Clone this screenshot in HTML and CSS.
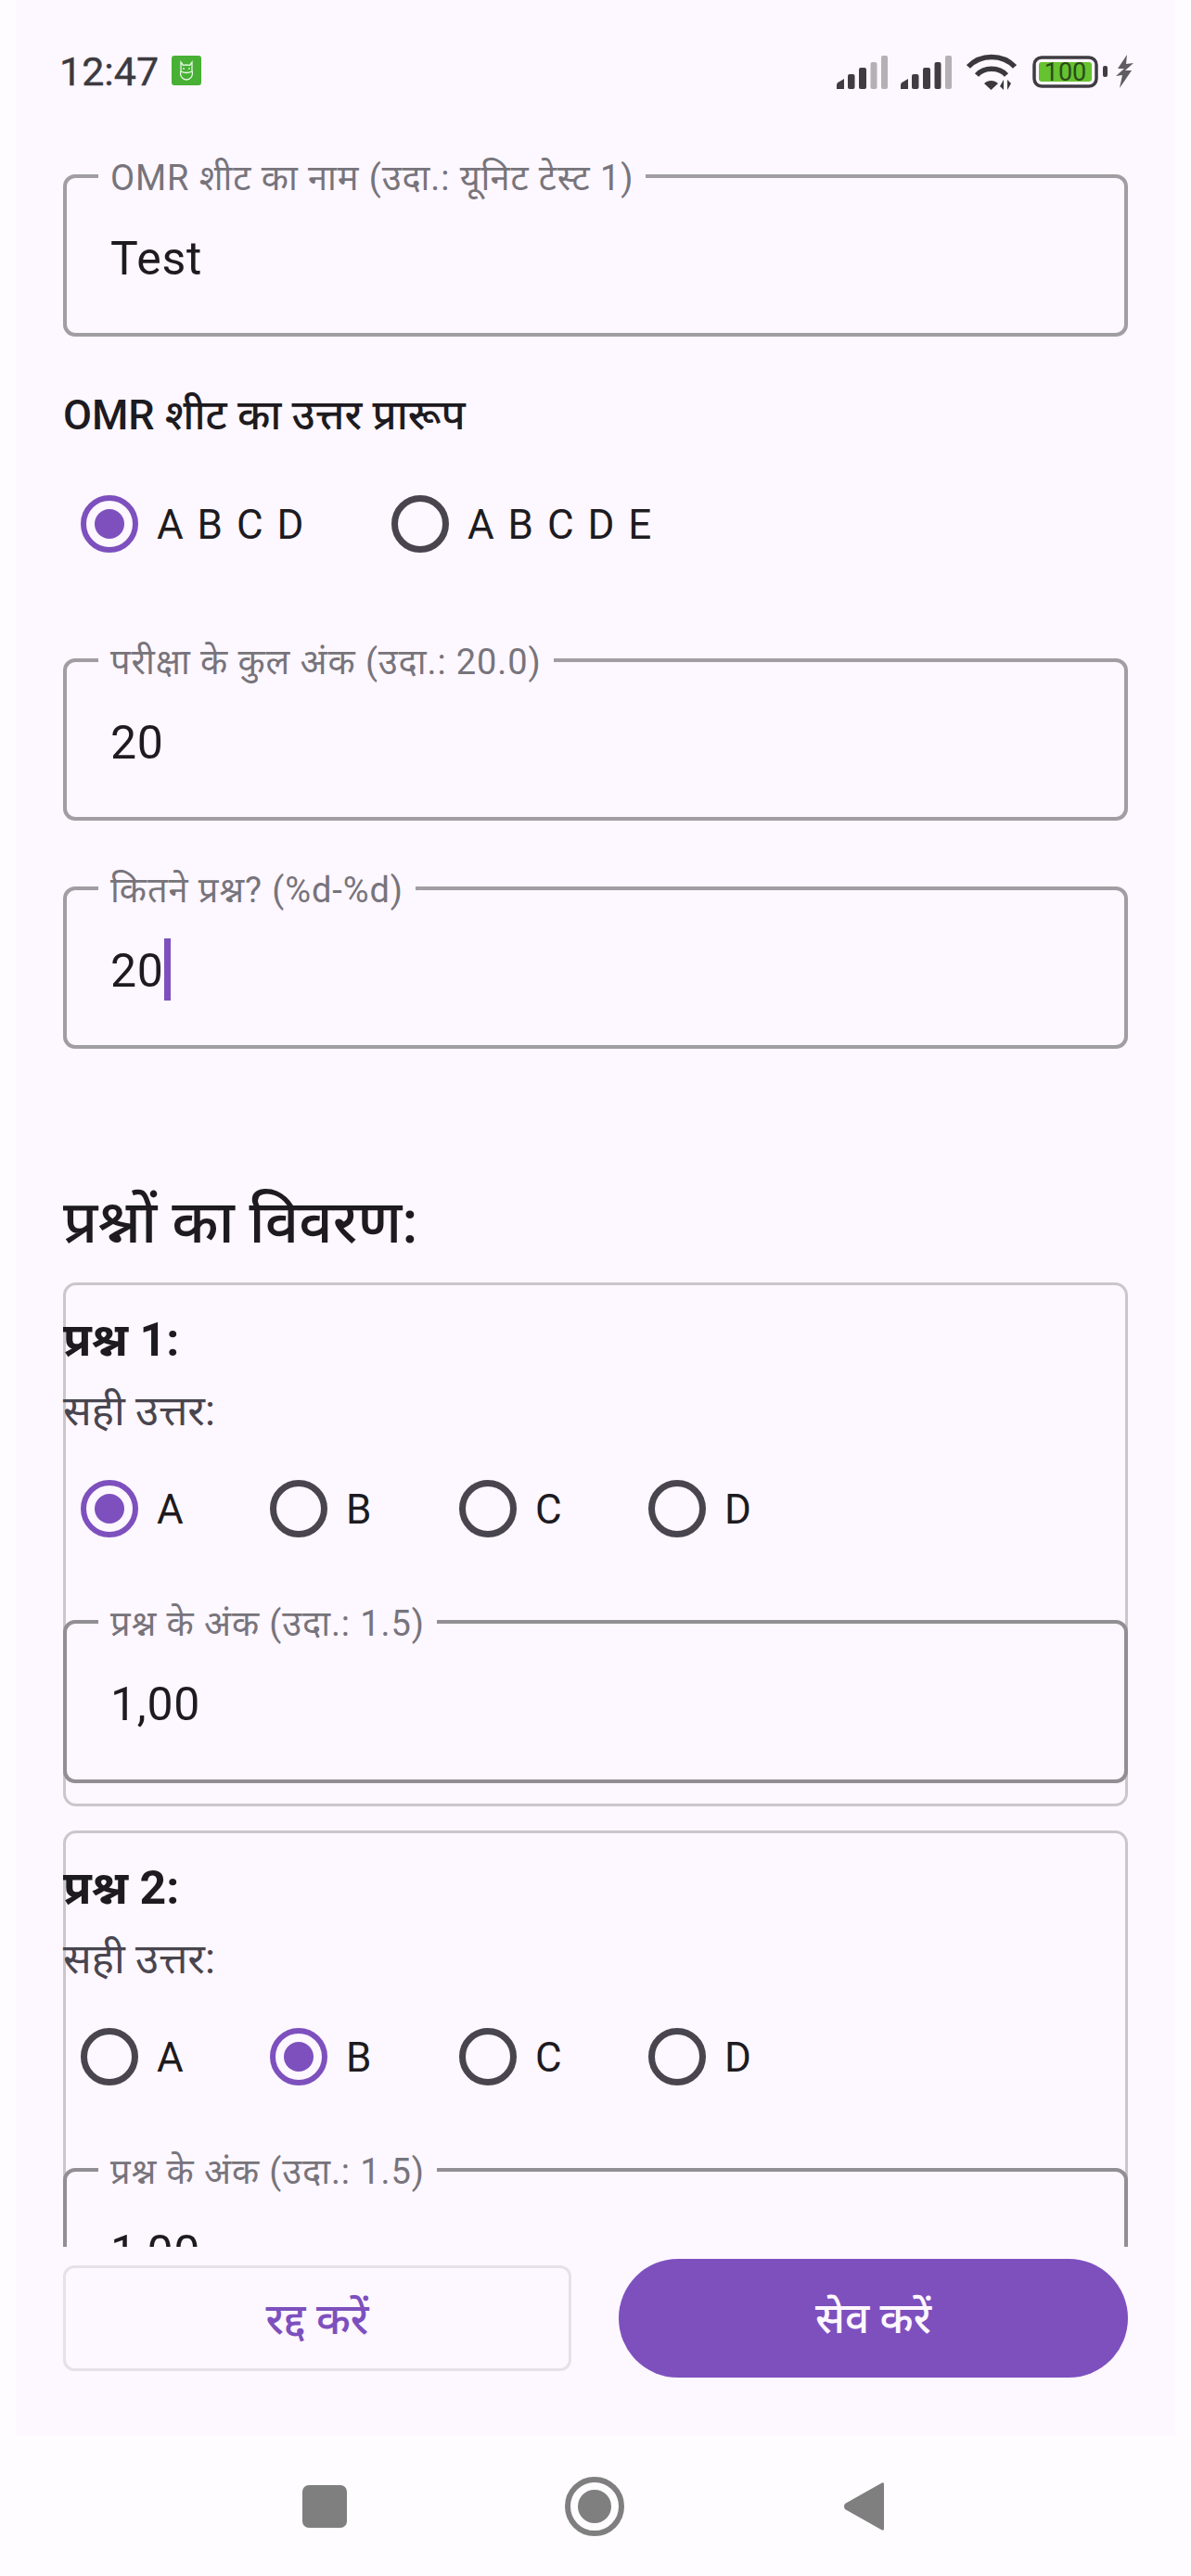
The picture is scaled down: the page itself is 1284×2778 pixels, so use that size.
FILE: index.html
```html
<!DOCTYPE html>
<html lang="hi">
<head>
<meta charset="utf-8">
<title>OMR</title>
<link rel="stylesheet" href="styles.css">
</head>
<body>
<div class="app">
  <header class="status">
    <span class="time">12:47</span>
    <svg class="app-icon" viewBox="0 0 32 32"><rect width="32" height="32" rx="3" fill="#47b035"/><path d="M10 7l2.500 3.500q3.500-1 7 0L22 7v9c2 7-3 10-6 10s-8-3-6-10z" fill="none" stroke="#eaf7e6" stroke-width="1.300"/><path d="M10 17q6 3 12 0" fill="none" stroke="#eaf7e6" stroke-width="1.300"/><circle cx="13" cy="14" r=".9" fill="#eaf7e6"/><circle cx="19" cy="14" r=".9" fill="#eaf7e6"/></svg>
    <div class="status-right">
      <svg class="signal" viewBox="0 0 55 36"><g fill="#3f3d42"><path d="M0 36v-4q0-3 3-4l5-3v11z"/><rect x="12" y="20" width="7.500" height="16" rx="2"/><rect x="24" y="13" width="8" height="23" rx="2"/></g><g fill="#b5b0b5"><rect x="36.500" y="7" width="7" height="29" rx="2"/><rect x="48" y="0" width="7" height="36" rx="2"/></g></svg>
      <svg class="signal" viewBox="0 0 55 36"><g fill="#3f3d42"><path d="M0 36v-4q0-3 3-4l5-3v11z"/><rect x="12" y="20" width="7.500" height="16" rx="2"/><rect x="24" y="13" width="8" height="23" rx="2"/><rect x="36.500" y="7" width="7" height="29" rx="2"/></g><rect x="48" y="0" width="7" height="36" rx="2" fill="#b5b0b5"/></svg>
      <svg class="wifi" viewBox="0 0 54 40"><g fill="none" stroke="#3a383d" stroke-width="5.500"><path d="M2 15C15 1 39 1 52 15"/><path d="M11 24C19 15 35 15 43 24"/></g><path d="M19 33c4-4 11-4 15 0l-7.500 7z" fill="#3a383d"/><path d="M40 29v11l-4-4zM44 40V29l4 4z" fill="#3a383d"/></svg>
      <div class="battery"><svg class="battery-body" viewBox="0 0 71 35"><rect x="2" y="2" width="67" height="31" rx="8" fill="none" stroke="#3f3d42" stroke-width="3.500"/><rect x="7" y="7" width="57" height="21" rx="3" fill="#66c22f"/><text class="battery-text" x="35.500" y="27">100</text></svg><span class="battery-nub"></span></div>
      <svg class="bolt" viewBox="0 0 20 36"><path d="M13 0L3 15l7 0-9 8 7-1L5 36 18 17l-7 0 9-8-8 1z" fill="#5f5d61"/></svg>
    </div>
  </header>

  <main class="scroll">
    <fieldset class="field field-first">
      <legend class="field-label">OMR शीट का नाम (उदा.: यूनिट टेस्ट 1)</legend>
      <div class="field-value">Test</div>
    </fieldset>

    <h2 class="format-title">OMR शीट का उत्तर प्रारूप</h2>
    <div class="format-row">
      <div class="option option-format"><span class="radio checked"><span class="dot"></span></span><span class="option-label spaced">A B C D</span></div>
      <div class="option"><span class="radio"></span><span class="option-label spaced">A B C D E</span></div>
    </div>

    <fieldset class="field field-marks">
      <legend class="field-label">परीक्षा के कुल अंक (उदा.: 20.0)</legend>
      <div class="field-value">20</div>
    </fieldset>
    <fieldset class="field field-count">
      <legend class="field-label">कितने प्रश्न? (%d-%d)</legend>
      <div class="field-value">20<span class="caret"></span></div>
    </fieldset>

    <h1 class="section-title">प्रश्नों का विवरण:</h1>

    <section class="card">
      <div class="card-inner">
        <h3 class="q-title">प्रश्न 1:</h3>
        <p class="q-sub">सही उत्तर:</p>
        <div class="answer-row">
          <div class="option option-answer"><span class="radio checked"><span class="dot"></span></span><span class="option-label">A</span></div>
          <div class="option option-answer"><span class="radio"></span><span class="option-label">B</span></div>
          <div class="option option-answer"><span class="radio"></span><span class="option-label">C</span></div>
          <div class="option option-answer"><span class="radio"></span><span class="option-label">D</span></div>
        </div>
        <fieldset class="field field-q">
          <legend class="field-label">प्रश्न के अंक (उदा.: 1.5)</legend>
          <div class="field-value">1,00</div>
        </fieldset>
      </div>
    </section>

    <section class="card">
      <div class="card-inner">
        <h3 class="q-title">प्रश्न 2:</h3>
        <p class="q-sub">सही उत्तर:</p>
        <div class="answer-row">
          <div class="option option-answer"><span class="radio"></span><span class="option-label">A</span></div>
          <div class="option option-answer"><span class="radio checked"><span class="dot"></span></span><span class="option-label">B</span></div>
          <div class="option option-answer"><span class="radio"></span><span class="option-label">C</span></div>
          <div class="option option-answer"><span class="radio"></span><span class="option-label">D</span></div>
        </div>
        <fieldset class="field field-q">
          <legend class="field-label">प्रश्न के अंक (उदा.: 1.5)</legend>
          <div class="field-value">1,00</div>
        </fieldset>
      </div>
    </section>
  </main>

  <footer class="actions">
    <button class="btn btn-cancel">रद्द करें</button>
    <button class="btn btn-save">सेव करें</button>
  </footer>
</div>
<nav class="navbar">
  <svg class="nav-square" viewBox="0 0 48 46"><rect width="48" height="46" rx="7" fill="#7f7f7f"/></svg>
  <svg class="nav-home" viewBox="0 0 64 64"><circle cx="32" cy="32" r="29" fill="none" stroke="#7f7f7f" stroke-width="6"/><circle cx="32" cy="32" r="18" fill="#7f7f7f"/></svg>
  <svg class="nav-back" viewBox="0 0 44 54"><path d="M44 3v48q0 3-3 1L2 30q-2-3 0-6L41 2q3-2 3 1z" fill="#7f7f7f"/></svg>
</nav>
</body>
</html>
```
FILE: styles.css
```css
* { box-sizing: border-box; }
html, body { margin: 0; padding: 0; }
body {
  width: 1284px;
  height: 2778px;
  overflow: hidden;
  background: #fefcfe;
  font-family: Roboto, "Noto Sans Devanagari", "Lohit Devanagari", "Noto Sans", sans-serif;
  color: #1d1b20;
}
.app {
  margin: 0 17px 0 17px;
  height: 2627px;
  background: #fdf7ff;
  display: flex;
  flex-direction: column;
}
.status {
  height: 130px;
  flex: none;
  padding: 24px 0 0 47px;
  display: flex;
  align-items: center;
}
.time { font-size: 43px; line-height: 50px; color: #3b3a3f; -webkit-text-stroke: 0.4px #3b3a3f; }
.app-icon { width: 32px; height: 32px; margin: -3px 0 0 14px; }
.status-right {
  margin-left: auto;
  padding-right: 45px;
  display: flex;
  align-items: center;
}
.signal { width: 55px; height: 36px; margin-right: 14px; margin-top: 2px; }
.signal + .wifi { margin-left: 2px; }
.wifi { width: 54px; height: 40px; margin-right: 16px; }
.battery { display: flex; align-items: center; gap: 4px; margin-right: 8px; }
.battery-body { width: 73px; height: 35px; }
.battery-text { font-size: 27px; fill: #2b4a1c; text-anchor: middle; font-family: Roboto, sans-serif; }
.battery-nub { width: 5px; height: 12px; background: #3f3d42; border-radius: 2px; }
.bolt { width: 20px; height: 36px; }

.scroll {
  flex: 1;
  min-height: 0;
  overflow: hidden;
  padding: 35px 51px 0;
}
.field {
  margin: 0;
  min-width: 0;
  height: 198px;
  padding: 0 0 0 47px;
  border: 4px solid #a09da3;
  border-radius: 13px;
  display: block;
}
.field-label {
  margin-left: -13px;
  padding: 6px 13px 0;
  font-size: 38px;
  line-height: 43px;
  letter-spacing: 0.9px;
  color: #77747b;
}
.field-value {
  font-size: 50px;
  line-height: 64px;
  margin-top: 33px;
  display: flex;
  align-items: center;
  letter-spacing: 0.75px;
}
.caret {
  width: 7px;
  height: 67px;
  margin: -3px 0 -6px;
  align-self: flex-start;
  background: #7d50be;
  flex: none;
}
.field-marks { margin-top: 91px; }
.field-count { margin-top: 48px; }

.format-title {
  margin: 60px 0 0;
  font-size: 45px;
  line-height: 50px;
  font-weight: 500;
}
.format-row { margin: 61px 0 0 19px; display: flex; }
.option { display: flex; align-items: center; }
.option-format { width: 335px; }
.option-answer { width: 204px; }
.radio {
  width: 62px;
  height: 62px;
  border: 7px solid #49454f;
  border-radius: 50%;
  display: flex;
  align-items: center;
  justify-content: center;
  flex: none;
}
.radio.checked { border-width: 6px; border-color: #7d50be; }
.dot { width: 32px; height: 32px; border-radius: 50%; background: #7d50be; }
.option-label { margin-left: 20px; padding-top: 2px; font-size: 44px; line-height: 50px; }
.option-label.spaced { letter-spacing: 2px; }

.section-title {
  margin: 153px 0 0;
  font-size: 64px;
  line-height: 70px;
  font-weight: 500;
}
.card {
  margin-top: 29px;
  border: 3px solid #cac7cc;
  border-radius: 14px;
}
.card + .card { margin-top: 26px; }
.card-inner { margin: 0 -3px; padding: 31px 0 22px; }
.q-title { margin: 0; font-size: 50px; line-height: 56px; font-weight: 700; }
.q-sub { margin: 24px 0 0; font-size: 45.500px; line-height: 50px; color: #49454f; }
.answer-row { margin: 49px 0 0 19px; display: flex; }
.field-q { margin-top: 66px; height: 199px; border-color: #918e94; }

.actions {
  flex: none;
  height: 204px;
  padding: 13px 51px 63px;
  display: flex;
  align-items: center;
  gap: 51px;
  background: #fdf7ff;
}
.btn {
  flex: none;
  margin: 0;
  padding: 8px 0 0;
  font-family: inherit;
  font-weight: 500;
}
.btn-cancel {
  width: 548px;
  height: 114px;
  background: transparent;
  border: 3px solid #e6e0e9;
  border-radius: 12px;
  color: #7d50be;
  font-size: 47px;
}
.btn-save {
  width: 549px;
  height: 128px;
  background: #7d50be;
  border: 0;
  border-radius: 64px;
  color: #fdf7ff;
  font-size: 46px;
}
.navbar {
  height: 151px;
  display: flex;
  align-items: center;
}
.nav-square { width: 48px; height: 46px; margin-left: 326px; }
.nav-home { width: 64px; height: 64px; margin-left: 235px; }
.nav-back { width: 44px; height: 54px; margin-left: 236px; }
```
